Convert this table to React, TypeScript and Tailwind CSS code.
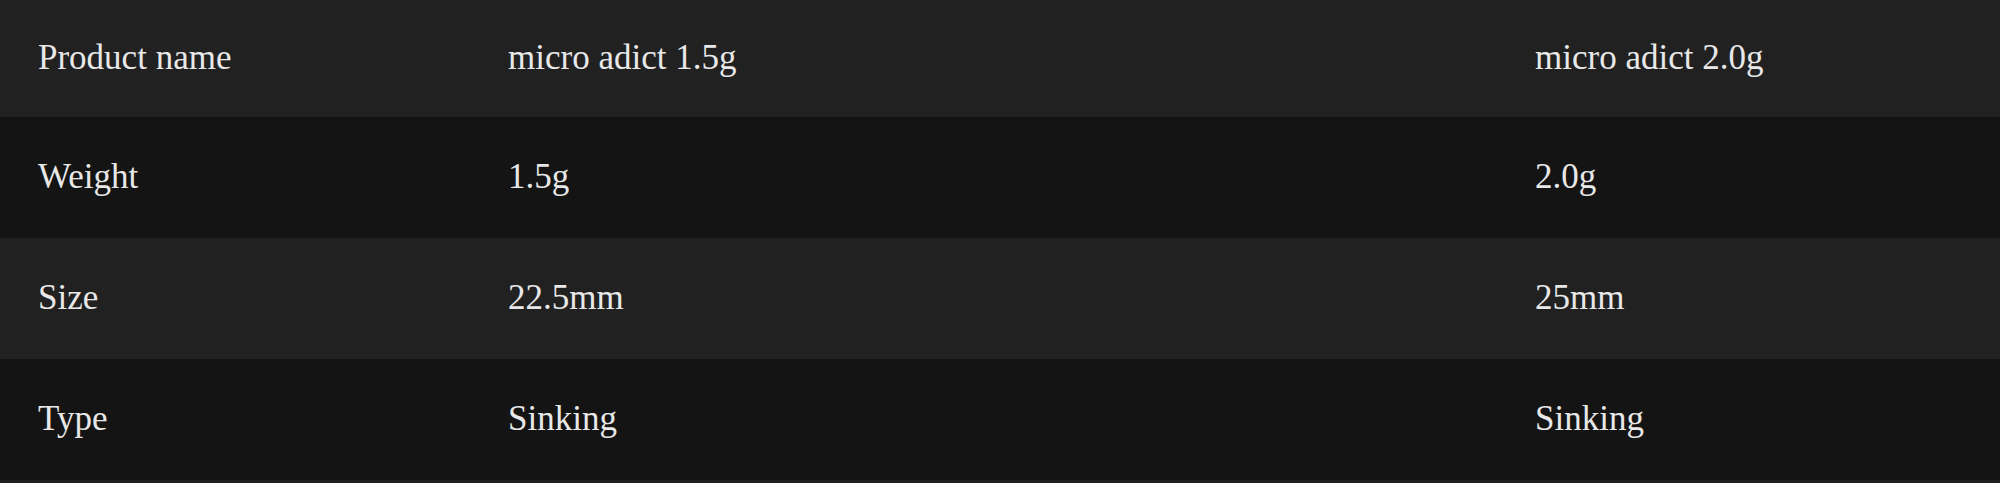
import React from 'react';

type SpecRow = {
  label: string;
  a: string;
  b: string;
};

const rows: SpecRow[] = [
  { label: 'Product name', a: 'micro adict 1.5g', b: 'micro adict 2.0g' },
  { label: 'Weight', a: '1.5g', b: '2.0g' },
  { label: 'Size', a: '22.5mm', b: '25mm' },
  { label: 'Type', a: 'Sinking', b: 'Sinking' },
];

function App(): React.ReactElement {
  return (
    <div className="w-[2000px] h-[483px] bg-[#1f1f1f] text-[#e8e8e8] font-['Liberation_Serif',serif] text-[35px] leading-none overflow-hidden">
      {rows.map((row, i) => (
        <div
          key={row.label}
          className={`grid grid-cols-[470px_1027px_1fr] items-center pb-[3px] ${
            i === 0 ? 'h-[117px]' : 'h-[121px]'
          } ${i % 2 === 0 ? 'bg-[#212121]' : 'bg-[#141414]'}`}
        >
          <div className="pl-[38px]">{row.label}</div>
          <div className="pl-[38px]">{row.a}</div>
          <div className="pl-[38px]">{row.b}</div>
        </div>
      ))}
    </div>
  );
}

export default App;
